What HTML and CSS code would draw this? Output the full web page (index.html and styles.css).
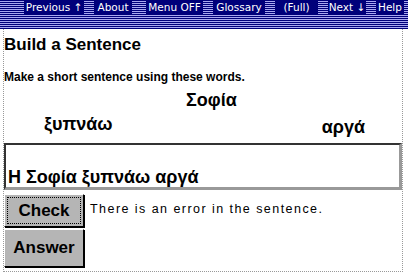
FILE: index.html
```html
<!DOCTYPE html>
<html>
<head>
<meta charset="utf-8">
<link rel="stylesheet" href="styles.css">
</head>
<body>
<div class="nav">
  <span class="item w-prev">Previous ↑</span>
  <span class="item w-about">About</span>
  <span class="item w-menu">Menu OFF</span>
  <span class="item w-gloss">Glossary</span>
  <span class="item w-full">(Full)</span>
  <span class="item w-next">Next ↓</span>
  <span class="item w-help">Help</span>
</div>
<div class="page">
  <h1 class="title">Build a Sentence</h1>
  <p class="instr">Make a short sentence using these words.</p>
  <div class="words">
    <div class="word w1">Σοφία</div>
    <div class="row2">
      <div class="word w2">ξυπνάω</div>
      <div class="word w3">αργά</div>
    </div>
  </div>
  <div class="answerbox">Η Σοφία ξυπνάω αργά</div>
  <div class="controls">
    <div class="buttons">
      <button class="btn focus">Check</button>
      <button class="btn">Answer</button>
    </div>
    <div class="msg">There is an error in the sentence.</div>
  </div>
</div>
</body>
</html>
```
FILE: styles.css
```css
html, body { margin: 0; padding: 0; background: #fff; }
body { width: 408px; height: 273px; overflow: hidden; font-family: "Liberation Sans", Arial, sans-serif; }
.nav {
  height: 29px;
  background: repeating-linear-gradient(to bottom, #00007a 0 1px, #a8a8f0 1px 2px);
  display: flex;
  align-items: flex-start;
  padding-left: 24px;
  gap: 10px;
}
.item {
  background: #00007a;
  color: #fff;
  height: 15px;
  font-family: "DejaVu Sans", sans-serif;
  font-size: 10.5px;
  line-height: 15px;
  text-align: center;
  white-space: nowrap;
}
.w-prev { width: 60px; }
.w-about { width: 38px; }
.w-menu { width: 57px; margin-left: 4px; }
.w-gloss { width: 52px; }
.w-full { width: 43px; }
.w-next { width: 38px; }
.w-help { width: 28px; }
.page {
  margin-left: 3px;
  width: 400px;
  height: 243px;
  border-left: 1px dotted #999;
  border-right: 1px dotted #999;
  border-bottom: 1px dotted #999;
  box-sizing: border-box;
}
.title { margin: 0; padding: 6px 0 0 0; font-size: 17px; font-weight: bold; line-height: 20px; }
.instr { margin: 15px 0 0 0; font-size: 12px; font-weight: bold; line-height: 14px; }
.words { font-size: 18px; font-weight: bold; }
.word { line-height: 22px; }
.w1 { padding-left: 182px; margin-top: 5px; }
.row2 { display: flex; justify-content: space-between; padding: 0 37px 0 40px; margin-top: 2px; }
.w3 { padding-top: 3px; }
.answerbox {
  margin-top: 5px;
  height: 47px;
  box-sizing: border-box;
  border-top: 2px solid #333;
  border-left: 2px solid #333;
  border-right: 3px solid #999;
  border-bottom: 3px solid #999;
  display: flex;
  align-items: flex-end;
  padding-left: 2px;
  font-size: 18px;
  font-weight: bold;
  line-height: 20px;
}
.controls { display: flex; margin-top: 4px; }
.buttons { display: flex; flex-direction: column; gap: 2px; }
.btn {
  width: 80px;
  height: 33px;
  background: #b5b5b5;
  border: 1px solid #000;
  border-top-color: #fff;
  border-left-color: #fff;
  box-shadow: 1px 1px 0 #000;
  font-family: "Liberation Sans", Arial, sans-serif;
  font-size: 17px;
  font-weight: bold;
  padding: 0;
}
.btn + .btn { height: 38px; }
.btn.focus { outline: 1px dotted #000; outline-offset: -4px; }
.msg { font-size: 12.5px; letter-spacing: 1.45px; padding: 8px 0 0 6px; }
```
